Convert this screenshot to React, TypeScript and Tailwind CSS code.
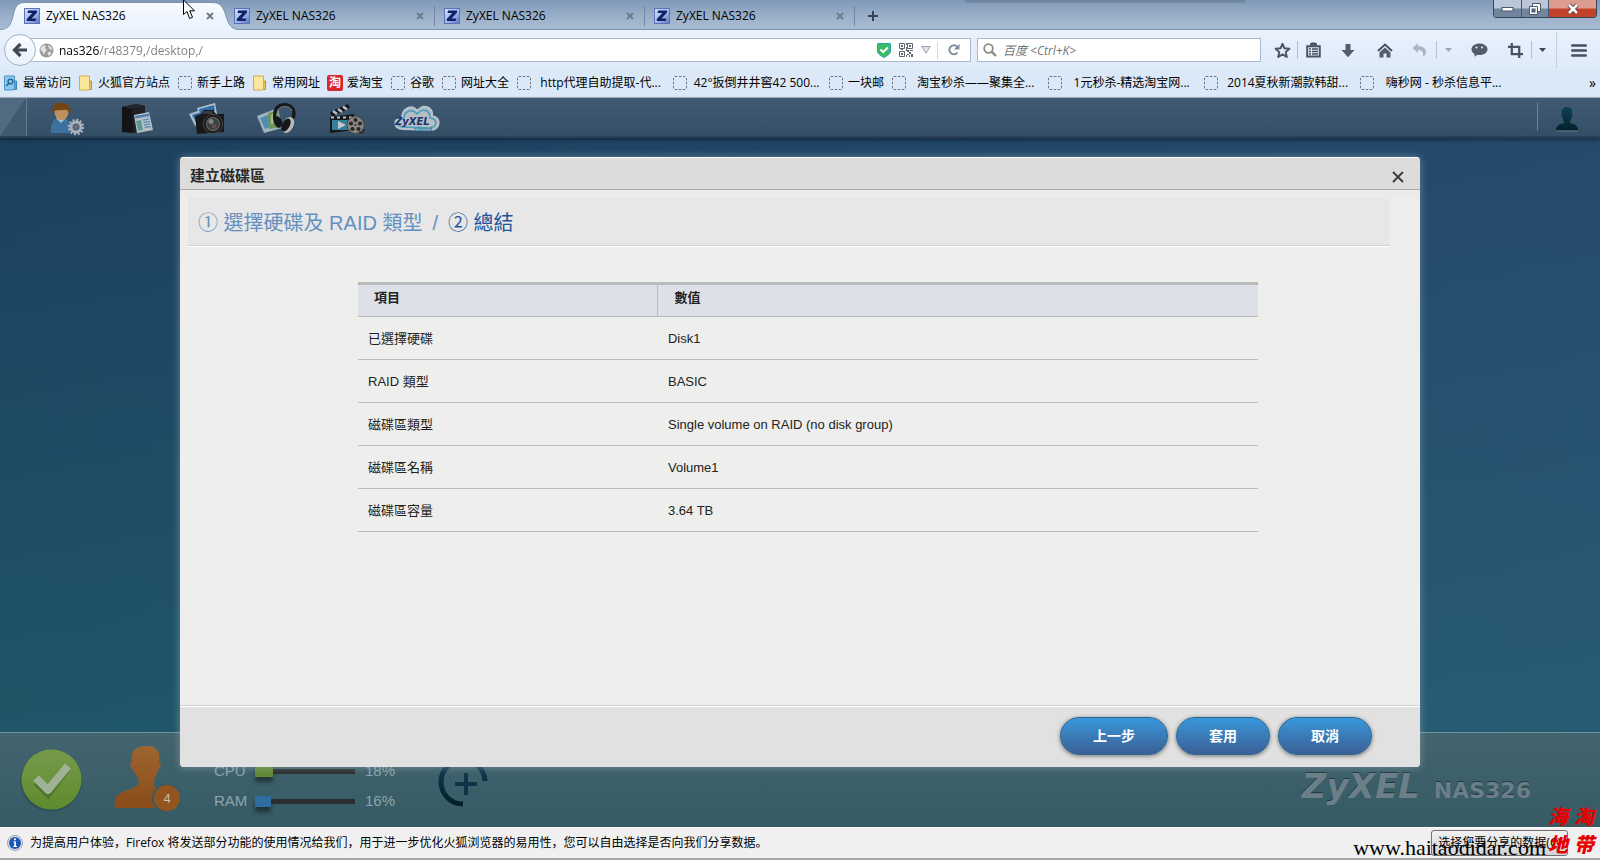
import React from "react";

const CHROME_FONT = "font-['Open_Sans','Noto_Sans_CJK_SC',sans-serif]";
const NAS_FONT = "font-['Liberation_Sans','Noto_Sans_CJK_TC',sans-serif]";

/* ---------- browser tabs ---------- */

function ZIcon() {
  return (
    <svg width="16" height="16" viewBox="0 0 16 16" className="shrink-0" aria-hidden="true">
      <defs>
        <linearGradient id="zbg" x1="0" y1="0" x2="1" y2="1">
          <stop offset="0" stopColor="#d3e2f8" />
          <stop offset="0.5" stopColor="#9fbdec" />
          <stop offset="1" stopColor="#5f74c4" />
        </linearGradient>
      </defs>
      <rect x="0.5" y="0.5" width="15" height="15" fill="url(#zbg)" stroke="#5d72b8" />
      <path d="M4 2.5H13V4.6L7.6 10.5H12.2L11.6 13H2.8V11L8.3 5H3.6Z" fill="#141f66" />
    </svg>
  );
}

function CloseMark() {
  return (
    <svg width="8" height="8" viewBox="0 0 8 8" aria-hidden="true">
      <path d="M1 1L7 7M7 1L1 7" stroke="#6f7c8b" strokeWidth="2" />
    </svg>
  );
}

function Tab({ active = false }: { active?: boolean }) {
  return (
    <div className="relative flex h-8 w-[210px] items-center pr-2 pl-[10px]">
      {active && (
        <svg className="absolute -left-[14px] top-0" width="240" height="30" viewBox="0 0 240 30" aria-hidden="true">
          <defs>
            <linearGradient id="tabbg" x1="0" y1="0" x2="0" y2="1">
              <stop offset="0" stopColor="#f7faff" />
              <stop offset="1" stopColor="#eaf2fd" />
            </linearGradient>
          </defs>
          <path d="M0 30V29C9 29 11 24 13 16C15 7 17 2.500 25 2.500H212C221 2.500 223 7 226 16C229 25 231 29.500 240 29.500V30Z" fill="url(#tabbg)" />
          <path d="M0 29.500C9 29.500 11 24 13 16C15 7 17 2.500 25 2.500H212C221 2.500 223 7 226 16C229 25 231 29.500 240 29.500" fill="none" stroke="#7890a8" />
        </svg>
      )}
      <div className="relative flex flex-1 items-center gap-[6px]">
        <ZIcon />
        <span className="flex-1 text-xs text-black">ZyXEL NAS326</span>
        <button type="button" aria-label="关闭标签页" className="flex size-3 items-center justify-center">
          <CloseMark />
        </button>
      </div>
      {!active && <span className="absolute right-[-1px] top-[6px] h-5 w-px bg-[#7388a3]" />}
    </div>
  );
}

function TabStrip() {
  return (
    <div className="relative flex h-[30px] items-start border-b border-[#7b92aa] bg-linear-to-b from-[#7f99b8] via-[#98adc7] to-[#a9bdd4]">
      <div className="absolute right-[355px] top-0 h-[2px] w-[280px] bg-[#66748a] blur-[1px]" />
      <div className="flex pl-[14px]">
        <Tab active />
        <Tab />
        <Tab />
        <Tab />
      </div>
      <button type="button" aria-label="新标签页" className="flex h-8 w-[38px] items-center justify-center">
        <svg width="12" height="12" viewBox="0 0 12 12" aria-hidden="true">
          <path d="M6 1V11M1 6H11" stroke="#37424e" strokeWidth="2" />
        </svg>
      </button>
      <div className="ml-auto mr-[3px] flex h-[18px] overflow-hidden rounded-b-[4px] border border-t-0 border-[#38455a]">
        <button type="button" aria-label="最小化" className="flex w-7 items-center justify-center border-r border-[#46566e] bg-linear-to-b from-[#b9c7d9] from-45% to-[#71859f] to-55%">
          <svg width="13" height="6" viewBox="0 0 13 6" aria-hidden="true">
            <rect x="1" y="1.500" width="11" height="3.500" fill="#fff" stroke="#4b5768" />
          </svg>
        </button>
        <button type="button" aria-label="还原" className="flex w-[27px] items-center justify-center border-r border-[#46566e] bg-linear-to-b from-[#b9c7d9] from-45% to-[#71859f] to-55%">
          <svg width="12" height="12" viewBox="0 0 12 12" aria-hidden="true">
            <path d="M3.500 .5H11.500V8.500H3.500Z" fill="#fff" stroke="#4b5768" />
            <path d="M.5 3.500H8.500V11.500H.5Z" fill="#fff" stroke="#4b5768" />
            <rect x="3" y="6" width="3" height="3" fill="#5e718b" stroke="#4b5768" />
          </svg>
        </button>
        <button type="button" aria-label="关闭" className="flex w-[47px] items-center justify-center bg-linear-to-b from-[#dc9c90] from-45% to-[#c2412b] to-55%">
          <svg width="14" height="12" viewBox="0 0 14 12" aria-hidden="true">
            <path d="M3 2L11 10M11 2L3 10" stroke="#5b3238" strokeWidth="4.500" />
            <path d="M3 2L11 10M11 2L3 10" stroke="#fff" strokeWidth="2.600" />
          </svg>
        </button>
      </div>
      <svg className="absolute left-[182px] top-0" width="15" height="20" viewBox="0 0 15 20" aria-hidden="true">
        <path d="M1.500 0V14.500L5 11.500L7.500 18.500L10.500 17.300L7.800 10.800H12.500Z" fill="#fff" stroke="#000" />
      </svg>
    </div>
  );
}

/* ---------- navigation toolbar ---------- */

function Divider() {
  return <span className="h-[18px] w-px shrink-0 bg-[#b3bfcd]" />;
}

function ToolButton({ label, width, children }: { label: string; width: string; children: React.ReactNode }) {
  return (
    <button type="button" aria-label={label} className={"flex h-6 shrink-0 items-center justify-center " + width}>
      {children}
    </button>
  );
}

function NavBar() {
  return (
    <div className="flex h-10 items-center bg-linear-to-b from-[#e9f1fc] to-[#deebf9]">
      <button type="button" aria-label="后退" className="relative z-10 ml-1 flex size-8 shrink-0 items-center justify-center rounded-full border border-[#9fb0c4] bg-linear-to-b from-[#fafcff] to-[#eaf2fc]">
        <svg width="16" height="16" viewBox="0 0 16 16" aria-hidden="true">
          <path d="M15 8H3M8.500 2L2.500 8L8.500 14" fill="none" stroke="#3f4a57" strokeWidth="3.200" />
        </svg>
      </button>
      <div className="-ml-[6px] flex h-6 flex-1 items-center border border-[#a9bad0] bg-white pl-2">
        <svg width="15" height="15" viewBox="0 0 15 15" className="shrink-0" aria-hidden="true">
          <circle cx="7.500" cy="7.500" r="7" fill="#9a9a9a" />
          <path d="M2 4L5 2L7 3L6 5L8 7L6 9L5 12L3.500 9L1.500 7Z" fill="#e2e2e2" />
          <path d="M9 2L12.500 4L13.500 7L11 6.500L9.500 4.500ZM9 9L12 8.500L12 11L10 13L8.500 11Z" fill="#dcdcdc" />
        </svg>
        <input
          aria-label="地址"
          defaultValue="nas326/r48379,/desktop,/"
          className="ml-[5px] h-5 min-w-0 flex-1 bg-linear-to-r from-black from-[40px] to-[#7d7d7d] to-[40px] bg-clip-text text-xs text-transparent caret-black outline-none"
        />
        <div className="flex items-center">
          <svg width="14" height="15" viewBox="0 0 14 15" aria-hidden="true">
            <path d="M.5 .5H13.500V8C13.500 11 10 13 7 14.500C4 13 .5 11 .5 8Z" fill="#3dbb62" stroke="#2aa8b8" />
            <path d="M3.500 6.500L6.200 9.200L10.800 4.500" fill="none" stroke="#fff" strokeWidth="2" />
          </svg>
          <svg className="ml-2" width="14" height="14" viewBox="0 0 14 14" aria-hidden="true">
            <path d="M.5 .5H5.500V5.500H.5ZM8.500 .5H13.500V5.500H8.500ZM.5 8.500H5.500V13.500H.5Z" fill="none" stroke="#5e6670" />
            <path d="M2 2H4V4H2ZM10 2H12V4H10ZM2 10H4V12H2ZM7 0H8V2H7ZM7 4H8V8H7ZM8 7H10V9H8ZM11 7H14V8H11ZM10 9H12V11H10ZM12 11H14V14H12ZM8 11H10V12H8ZM7 12H8V14H7ZM10 12H11V14H10ZM2 6H4V7H2Z" fill="#5e6670" />
          </svg>
          <svg className="ml-2" width="10" height="8" viewBox="0 0 10 8" aria-hidden="true">
            <path d="M.8 .5H9.200L5 7.300Z" fill="#dfe4ea" stroke="#9aa5b3" />
          </svg>
          <span className="ml-[6px] h-[17px] w-px bg-[#cfd8e2]" />
          <button type="button" aria-label="刷新" className="flex h-[22px] w-8 items-center justify-center">
            <svg width="14" height="14" viewBox="0 0 14 14" aria-hidden="true">
              <path d="M10.500 9.500A4.500 4.500 0 1 1 10.300 3.800" fill="none" stroke="#808d9d" strokeWidth="2" />
              <path d="M12.500 .8V6.500H7Z" fill="#808d9d" />
            </svg>
          </button>
        </div>
      </div>
      <div className="ml-[6px] flex h-6 w-[284px] shrink-0 items-center border border-[#a9bad0] bg-white pl-[5px]">
        <svg width="14" height="14" viewBox="0 0 14 14" className="shrink-0" aria-hidden="true">
          <circle cx="5.500" cy="5.500" r="4.300" fill="none" stroke="#8b8b8b" strokeWidth="1.800" />
          <path d="M8.600 8.600L13 13" stroke="#8b8b8b" strokeWidth="2.400" />
        </svg>
        <input aria-label="搜索" placeholder="百度 <Ctrl+K>" className="ml-[6px] h-5 min-w-0 flex-1 bg-transparent text-xs italic outline-none placeholder:text-[#757575]" />
      </div>
      <div className="ml-[6px] flex shrink-0 items-center">
        <ToolButton label="收藏" width="w-[30px]">
          <svg width="17" height="17" viewBox="0 0 17 17" aria-hidden="true">
            <path d="M8.500 1.800L10.500 6.300L15.400 6.800L11.700 10.100L12.800 15L8.500 12.400L4.200 15L5.300 10.100L1.600 6.800L6.500 6.300Z" fill="none" stroke="#46525f" strokeWidth="1.900" strokeLinejoin="round" />
          </svg>
        </ToolButton>
        <Divider />
        <ToolButton label="书签列表" width="w-[30px]">
          <svg width="15" height="16" viewBox="0 0 15 16" aria-hidden="true">
            <path d="M4 3.500V1.500L6 .5H9L11 1.500V3.500Z" fill="#46525f" />
            <path d="M1.200 4.200H13.800V14.500H1.200Z" fill="none" stroke="#46525f" strokeWidth="1.900" />
            <path d="M3 7H5M6 7H12M3 9.500H5M6 9.500H12M3 12H5M6 12H12" stroke="#46525f" strokeWidth="1.300" />
          </svg>
        </ToolButton>
        <ToolButton label="下载" width="w-10">
          <svg width="14" height="15" viewBox="0 0 14 15" aria-hidden="true">
            <path d="M4.500 1H9.500V7H13.500L7 14.300L.5 7H4.500Z" fill="#515d6a" />
          </svg>
        </ToolButton>
        <ToolButton label="主页" width="w-[34px]">
          <svg width="16" height="15" viewBox="0 0 16 15" aria-hidden="true">
            <path d="M1 8L8 1.500L15 8" fill="none" stroke="#46525f" strokeWidth="2" />
            <path d="M8 4.500L13.500 9.500V14.500H9.500V10.500H6.500V14.500H2.500V9.500Z" fill="#515d6a" />
          </svg>
        </ToolButton>
        <ToolButton label="撤销" width="w-[34px]">
          <svg width="15" height="14" viewBox="0 0 15 14" aria-hidden="true">
            <path d="M.5 5L6 .3V3.300C11 3.300 14 5.500 14 9C14 11 13 12.500 10.500 13.500C12 11.500 11.500 7 6 7V10Z" fill="#a9b5c3" />
          </svg>
        </ToolButton>
        <Divider />
        <ToolButton label="撤销列表" width="w-[22px]">
          <svg width="7" height="4" viewBox="0 0 7 4" aria-hidden="true"><path d="M0 0H7L3.500 4Z" fill="#9aa6b4" /></svg>
        </ToolButton>
        <ToolButton label="聊天" width="w-10">
          <svg width="17" height="14" viewBox="0 0 17 14" aria-hidden="true">
            <path d="M8.500 .5C13 .5 16.500 3 16.500 6.200C16.500 9.500 13 12 8.500 12C7.700 12 7 11.900 6.300 11.800L3.500 13.800V11C1.700 9.900 .5 8.200 .5 6.200C.5 3 4 .5 8.500 .5Z" fill="#515d6a" />
            <circle cx="5.500" cy="4.500" r="1.100" fill="#dfe9f6" /><circle cx="11" cy="4.500" r="1.100" fill="#dfe9f6" />
          </svg>
        </ToolButton>
        <ToolButton label="截图" width="w-8">
          <svg width="15" height="15" viewBox="0 0 15 15" aria-hidden="true">
            <path d="M3.800 0V11.200H15M0 3.800H11.200V15" fill="none" stroke="#46525f" strokeWidth="2.200" />
          </svg>
        </ToolButton>
        <Divider />
        <ToolButton label="截图选项" width="w-5">
          <svg width="7" height="4" viewBox="0 0 7 4" aria-hidden="true"><path d="M0 0H7L3.500 4Z" fill="#3b4652" /></svg>
        </ToolButton>
        <span className="ml-1 h-9 w-px bg-[#c4d0de]" />
        <ToolButton label="菜单" width="w-[43px]">
          <svg width="16" height="13" viewBox="0 0 16 13" aria-hidden="true">
            <path d="M1.200 1.500H14.800M1.200 6.500H14.800M1.200 11.500H14.800" stroke="#46525f" strokeWidth="2.400" strokeLinecap="round" />
          </svg>
        </ToolButton>
      </div>
    </div>
  );
}

/* ---------- bookmarks ---------- */

type BookmarkKind = "recent" | "folder" | "blank" | "tao";

const bookmarks: { kind: BookmarkKind; text: string; wide?: boolean }[] = [
  { kind: "recent", text: "最常访问" },
  { kind: "folder", text: "火狐官方站点" },
  { kind: "blank", text: "新手上路" },
  { kind: "folder", text: "常用网址" },
  { kind: "tao", text: "爱淘宝" },
  { kind: "blank", text: "谷歌" },
  { kind: "blank", text: "网址大全" },
  { kind: "blank", text: "http代理自助提取-代...", wide: true },
  { kind: "blank", text: "42°扳倒井井窖42 500...", wide: true },
  { kind: "blank", text: "一块邮" },
  { kind: "blank", text: "淘宝秒杀——聚集全...", wide: true },
  { kind: "blank", text: "1元秒杀-精选淘宝网...", wide: true },
  { kind: "blank", text: "2014夏秋新潮款韩甜...", wide: true },
  { kind: "blank", text: "嗨秒网 - 秒杀信息平...", wide: true },
];

function BookmarkIcon({ kind }: { kind: BookmarkKind }) {
  if (kind === "tao") {
    return <span className="flex size-4 shrink-0 items-center justify-center rounded-[2px] bg-[#d8262f] text-xs leading-4 font-bold text-white">淘</span>;
  }
  if (kind === "blank") {
    return (
      <svg width="16" height="16" viewBox="0 0 16 16" className="shrink-0" aria-hidden="true">
        <rect x="1.500" y="1.500" width="13" height="13" rx="1.500" fill="none" stroke="#6e7681" strokeDasharray="2.500 1.500" />
      </svg>
    );
  }
  const folder = kind === "folder";
  return (
    <svg width="16" height="16" viewBox="0 0 16 16" className="shrink-0" aria-hidden="true">
      <path d="M10 6H13.500V14.500H10Z" fill={folder ? "#e9c758" : "#5aa3d6"} stroke={folder ? "#b8953a" : "#3b83b4"} />
      <path d="M1.500 1H11.500V14L10.500 15H1.500Z" fill={folder ? "#fbe79a" : "#8cc8ec"} stroke={folder ? "#cfae4d" : "#4b94c4"} />
      {!folder && (
        <g fill="none" stroke="#1f6498" strokeWidth="1.400">
          <circle cx="7.500" cy="6.500" r="2.400" />
          <path d="M5.800 8.300L3.300 11" />
        </g>
      )}
    </svg>
  );
}

function Bookmarks() {
  return (
    <nav aria-label="书签" className="flex h-7 items-center gap-[7px] border-b border-[#a3b2c4] bg-[#dbe8f7] pb-px pl-[3px]">
      {bookmarks.map((b) => (
        <a key={b.text} href="#" className={"flex shrink-0 items-center gap-1 " + (b.wide ? "w-[149px]" : "")}>
          <BookmarkIcon kind={b.kind} />
          <span className={"text-xs whitespace-nowrap text-black " + (b.wide ? "flex-1 text-center" : "")}>{b.text}</span>
        </a>
      ))}
      <button type="button" aria-label="更多书签" className="ml-auto pr-1 text-sm leading-4 text-black">»</button>
    </nav>
  );
}

/* ---------- NAS desktop ---------- */

function AccountIcon() {
  return (
    <svg width="36" height="34" viewBox="0 0 36 34" aria-hidden="true">
      <path d="M2 31C1 19 6 16 12 16C19 16 22 20 22 31Z" fill="#3d72a0" />
      <path d="M7 16L12 21L17 16L14 14H10Z" fill="#a9c0d4" />
      <ellipse cx="12.500" cy="10" rx="7" ry="8" fill="#bd915b" />
      <path d="M3.500 11C2 3 8 0 13 1C20 1 23 6 21 12C20 9 18 7 14 8C10 9 6 7 3.500 11Z" fill="#744414" />
      <circle cx="27" cy="25" r="5" fill="#525d75" stroke="#a7b1bd" strokeWidth="3" />
      <circle cx="27" cy="25" r="7.200" fill="none" stroke="#a7b1bd" strokeWidth="2.200" strokeDasharray="2 1.770" />
      <circle cx="27" cy="25" r="2" fill="#75707c" />
    </svg>
  );
}

function StorageIcon() {
  return (
    <svg width="34" height="34" viewBox="0 0 34 34" aria-hidden="true">
      <path d="M2 5L16 2L25 4V29L13 31L2 30Z" fill="#121417" />
      <path d="M2 5L16 2L25 4L12 7Z" fill="#25282c" />
      <path d="M12 7L25 4V29L13 31Z" fill="#1e2023" />
      <path d="M14 13L29 10L33 28L17 31Z" fill="#b7c1c7" />
      <path d="M15 14L29 11.500L29.500 14L15.500 16.500Z" fill="#4a7fac" />
      <path d="M16 19L21 18L23 28L18 29Z" fill="#569a91" />
      <path d="M23 18L29 17M23.500 20.500L30 19.500M24 23L30 22M24.500 25.500L31 24.500" stroke="#6594ba" strokeWidth="1.300" />
    </svg>
  );
}

function PhotoIcon() {
  return (
    <svg width="38" height="34" viewBox="0 0 38 34" aria-hidden="true">
      <path d="M1 12L24 4L28 16L7 24Z" fill="#aebbc8" />
      <path d="M9 6L27 1L29 12L12 15Z" fill="#b6c3d0" />
      <path d="M11 7L26 3L27 9L12 12Z" fill="#2e70ac" />
      <path d="M4 13L20 8L22 14L8 20Z" fill="#2f6ca6" />
      <path d="M7 14L13 12L16 8H25L28 12L36 12V30L9 32Z" fill="#18191c" />
      <path d="M16 9H24L25 12H14Z" fill="#3a3c40" />
      <circle cx="25" cy="22" r="9.500" fill="#15171a" stroke="#4c4c4e" />
      <circle cx="25" cy="22" r="6.500" fill="#37413f" stroke="#5d5c59" strokeWidth="1.500" />
      <circle cx="23" cy="19.500" r="2.500" fill="#7d877f" />
      <circle cx="26" cy="24" r="2.500" fill="#5f4b51" />
    </svg>
  );
}

function MusicIcon() {
  return (
    <svg width="42" height="34" viewBox="0 0 42 34" aria-hidden="true">
      <path d="M1 14L22 6L26 26L8 31Z" fill="#a3b3c2" />
      <path d="M4 16L12 13L14 25L9 27Z" fill="#508eb0" />
      <path d="M12 11L22 9L24 25L13 27Z" fill="#719553" />
      <path d="M16 13V22M16 13L20 12V20" fill="none" stroke="#b7cf9e" strokeWidth="1.500" />
      <path d="M19 18C17 5 24 2 31 3C39 5 40 13 34 21" fill="none" stroke="#171b1f" strokeWidth="3.500" />
      <path d="M22 8C25 3 34 3 36 9" fill="none" stroke="#79828b" />
      <ellipse cx="22" cy="20" rx="4" ry="6" fill="#14181b" transform="rotate(-20 22 20)" />
      <ellipse cx="32" cy="23" rx="5.500" ry="8.500" fill="#b7b9ba" transform="rotate(28 32 23)" />
      <ellipse cx="30" cy="23" rx="3.800" ry="7" fill="#14171a" transform="rotate(28 30 23)" />
    </svg>
  );
}

function VideoIcon() {
  return (
    <svg width="38" height="34" viewBox="0 0 38 34" aria-hidden="true">
      <path d="M2 15L26 12V28L2 31Z" fill="#15191d" />
      <path d="M4 18H22V28H4Z" fill="#308199" />
      <path d="M10 19L18 23L10 27Z" fill="#bfc9cd" />
      <path d="M2 10L20 2L22 6L4 15Z" fill="#15191d" />
      <path d="M5 9L9 12M10 7L14 10M15 4.500L19 7.500" stroke="#b9c0c5" strokeWidth="2.500" />
      <path d="M3 15.500H26" stroke="#b9c0c5" strokeWidth="2" strokeDasharray="3 3" />
      <circle cx="27.500" cy="23" r="8.500" fill="#8e8882" stroke="#4d4a48" />
      <g fill="#282829">
        <circle cx="27.500" cy="18" r="2.100" /><circle cx="32" cy="21.500" r="2.100" /><circle cx="30.500" cy="27" r="2.100" />
        <circle cx="24.500" cy="27" r="2.100" /><circle cx="23" cy="21.500" r="2.100" /><circle cx="27.500" cy="23" r="1" />
      </g>
      <path d="M31 30C34 32 36 30 36 27" fill="none" stroke="#31302f" strokeWidth="2" />
    </svg>
  );
}

function CloudIcon() {
  return (
    <svg width="46" height="30" viewBox="0 0 46 30" aria-hidden="true">
      <path d="M9 25C-2 25 0 13 8 14C8 4 18 0 23 7C31 -2 39 5 38 12C47 13 47 25 37 26Z" fill="#a8b5bf" stroke="#b8c3cb" strokeWidth="2" />
      <path d="M9 23C2 23 3 15 10 15C10 7 18 4 23 10C30 3 36 7 36 14C44 15 43 23 36 24Z" fill="#b6bec6" stroke="#4a9dbc" strokeWidth="1.500" />
      <text x="1" y="21" fontSize="10" fontStyle="italic" fontWeight="900" fontFamily="DejaVu Sans, sans-serif" fill="#1c3468">ZyXEL</text>
      <text x="20" y="27" fontSize="6" fontWeight="bold" fontFamily="DejaVu Sans, sans-serif" fill="#318cac">cloud</text>
    </svg>
  );
}

const apps = [
  { label: "控制台", icon: <AccountIcon /> },
  { label: "儲存", icon: <StorageIcon /> },
  { label: "照片", icon: <PhotoIcon /> },
  { label: "音樂", icon: <MusicIcon /> },
  { label: "影片", icon: <VideoIcon /> },
  { label: "ZyXEL cloud", icon: <CloudIcon /> },
];

function AppBar() {
  return (
    <header className="relative flex h-10 shrink-0 items-center border-b-2 border-[#2b4058] bg-linear-to-b from-[#405b73] to-[#344e66] shadow-[0_2px_4px_rgba(0,0,0,0.4)]">
      <div className="h-full w-[27px] border-r border-[#64798c] bg-linear-to-br from-[#506b80] from-50% to-[#3e5a70] to-50%" />
      <div className="ml-[5px] flex">
        {apps.map((a) => (
          <button key={a.label} type="button" aria-label={a.label} className="flex h-[38px] w-[70px] items-center justify-center pt-1">
            {a.icon}
          </button>
        ))}
      </div>
      <span className="ml-auto h-7 w-px bg-[#6d8193]" />
      <button type="button" aria-label="使用者" className="mr-1 flex h-[38px] w-[58px] items-center justify-center pt-1">
        <svg width="24" height="26" viewBox="0 0 24 26" aria-hidden="true">
          <defs>
            <linearGradient id="ug" x1="0" y1="0" x2="0" y2="1">
              <stop offset="0" stopColor="#0d4153" /><stop offset="1" stopColor="#04202c" />
            </linearGradient>
          </defs>
          <path d="M12 1C16 1 18 4 17 8C18 9 17 11 16.500 11.500C16 14 15 15 15 17C19 18 23 19 23 24.500H1C1 19 5 18 9 17C9 15 8 14 7.500 11.500C7 11 6 9 7 8C6 4 8 1 12 1Z" fill="url(#ug)" />
          <path d="M1 25H23" stroke="#647789" />
        </svg>
      </button>
    </header>
  );
}

function Meter({ label, value, color }: { label: string; value: number; color: string }) {
  return (
    <div className="flex h-[30px] items-center text-[15px] text-[#8fa5aa]">
      <span className="w-[41px]">{label}</span>
      <span className="flex h-[11px] w-[100px] items-center">
        <span className={"h-[11px] shadow-[0_5px_4px_rgba(0,0,0,0.45)] " + color} style={{ width: `${value}%` }} />
        <span className="h-[5px] flex-1 bg-[#2b2d30]" />
      </span>
      <span className="ml-[10px]">{value}%</span>
    </div>
  );
}

function StatusBar() {
  return (
    <footer className="flex h-[95px] shrink-0 items-center border-t border-[#73929c] bg-linear-to-b from-[#42646f] to-[#365b65]">
      <svg className="ml-[18px]" width="66" height="66" viewBox="0 0 66 66" aria-hidden="true">
        <defs>
          <linearGradient id="okg" x1="0" y1="0" x2="0" y2="1">
            <stop offset="0" stopColor="#779a4b" /><stop offset="1" stopColor="#5f8a2d" />
          </linearGradient>
        </defs>
        <circle cx="33" cy="34" r="31" fill="#2b4b52" opacity="0.600" />
        <circle cx="33.500" cy="32.500" r="30" fill="url(#okg)" />
        <path d="M18 35L30 47L49 22" fill="none" stroke="#4f7429" strokeWidth="7" />
        <path d="M18 31L30 43L50 19" fill="none" stroke="#9fb295" strokeWidth="8" strokeLinejoin="round" />
      </svg>
      <svg className="ml-[28px]" width="72" height="72" viewBox="0 0 72 72" aria-hidden="true">
        <defs>
          <linearGradient id="og" x1="0" y1="0" x2="0" y2="1">
            <stop offset="0" stopColor="#9d6531" /><stop offset="1" stopColor="#8a4c18" />
          </linearGradient>
        </defs>
        <path d="M34 2C44 1 49 7 47 18C50 19 49 24 46 26C44 33 42 34 42 42L48 45L41 54L43 64H3C2 53 4 51 13 47C22 44 27 42 27 37C26 32 23 30 21 26C18 24 17 19 20 18C18 8 23 2 34 2Z" fill="url(#og)" />
        <circle cx="55" cy="54" r="15" fill="#385c66" />
        <circle cx="55" cy="54" r="13" fill="#94541f" />
        <text x="55" y="59" textAnchor="middle" fontSize="13" fontFamily="Liberation Sans, sans-serif" fill="#c9bdb0">4</text>
      </svg>
      <div className="ml-[30px] pt-3">
        <Meter label="CPU" value={18} color="bg-[#648a35]" />
        <Meter label="RAM" value={16} color="bg-[#2d6e9e]" />
      </div>
      <svg className="ml-[43px] mt-1" width="52" height="52" viewBox="0 0 52 52" aria-hidden="true">
        <defs>
          <linearGradient id="pg" x1="0" y1="0" x2="0" y2="1">
            <stop offset="0" stopColor="#123e55" /><stop offset="1" stopColor="#051f2b" />
          </linearGradient>
        </defs>
        <path d="M25 48A22 22 0 1 1 47 25" fill="none" stroke="url(#pg)" strokeWidth="5" />
        <path d="M26 17H30V26H39V30H30V39H26V30H17V26H26Z" fill="#0d3448" />
      </svg>
      <div className="mr-[69px] ml-auto flex items-baseline gap-[14px] pt-4 font-['DejaVu_Sans','Open_Sans',sans-serif] font-bold text-[#6b7f88] [text-shadow:0_-1px_0_#24373e]">
        <span className="text-[34px] leading-10 italic">ZyXEL</span>
        <span className="text-[22px] leading-10">NAS326</span>
      </div>
    </footer>
  );
}

/* ---------- volume wizard ---------- */

const rows = [
  ["已選擇硬碟", "Disk1"],
  ["RAID 類型", "BASIC"],
  ["磁碟區類型", "Single volume on RAID (no disk group)"],
  ["磁碟區名稱", "Volume1"],
  ["磁碟區容量", "3.64 TB"],
];

function WizardButton({ children }: { children: React.ReactNode }) {
  return (
    <button type="button" className="h-[38px] rounded-full border border-[#2b6791] bg-linear-to-b from-[#3798dc] to-[#3a5f96] px-8 text-sm font-bold text-white shadow-[0_1px_4px_rgba(0,0,0,0.5)]">
      {children}
    </button>
  );
}

function Dialog() {
  return (
    <section role="dialog" aria-labelledby="wizard-title" className="flex w-full max-w-[1240px] flex-col overflow-hidden rounded-[4px] bg-[#eeeeec] text-[#222] shadow-[0_0_8px_rgba(170,190,195,0.5)]">
      <header className="flex h-[33px] shrink-0 items-center justify-between border-t border-b border-t-white border-b-[#a9a9a9] bg-[#dcdcdc] pt-1 pr-[14px] pl-[10px]">
        <h1 id="wizard-title" className="text-[15px] leading-6 font-bold text-[#2a2a2a]">建立磁碟區</h1>
        <button type="button" aria-label="關閉" className="flex size-4 items-center justify-center pt-[2px]">
          <svg width="14" height="12" viewBox="0 0 14 12" aria-hidden="true">
            <path d="M2 1L12 11M12 1L2 11" stroke="#3a3a3a" strokeWidth="1.800" />
          </svg>
        </button>
      </header>
      <div className="h-2 shrink-0 bg-[#ebebeb]" />
      <div className="flex-1">
        <h2 className="mr-[30px] ml-2 flex h-[48px] items-center gap-[10px] border-b border-[#cfcfcf] bg-[#e7e7e7] pt-[3px] pl-[10px] text-xl text-[#6490bf] shadow-[0_1px_0_#fff]">
          <span>① 選擇硬碟及 RAID 類型</span>
          <span>/</span>
          <span className="text-[#1f549c]">② 總結</span>
        </h2>
        <div className="mt-9 mr-[162px] ml-[178px]">
          <table className="w-full table-fixed border-collapse text-left text-[13px]">
            <thead>
              <tr className="h-[33px] border-t-[3px] border-b border-[#b9bbbc] bg-[#dde1e7]">
                <th scope="col" className="w-1/3 border-r border-[#b9bbbc] px-4 pb-[5px] font-bold">項目</th>
                <th scope="col" className="px-4 pb-[5px] font-bold">數值</th>
              </tr>
            </thead>
            <tbody>
              {rows.map(([name, value]) => (
                <tr key={name} className="h-[43px] border-b border-[#b9bbbc]">
                  <td className="px-[10px] pt-px">{name}</td>
                  <td className="px-[10px] pt-px">{value}</td>
                </tr>
              ))}
            </tbody>
          </table>
        </div>
      </div>
      <footer className="flex h-[62px] shrink-0 items-center justify-end gap-2 border-t border-[#d2d2d2] bg-[#e1e1e1] pr-12 pb-[2px] shadow-[inset_0_1px_0_#fff]">
        <WizardButton>上一步</WizardButton>
        <WizardButton>套用</WizardButton>
        <WizardButton>取消</WizardButton>
      </footer>
    </section>
  );
}

/* ---------- notification bar and site mark ---------- */

function NotificationBar() {
  return (
    <div className="relative flex h-[33px] shrink-0 items-center border-t border-b-2 border-t-white border-b-[#a8a8a8] bg-[#f0f0f0] pr-8 pl-[7px] text-xs text-black">
      <svg width="16" height="16" viewBox="0 0 16 16" aria-hidden="true">
        <circle cx="8" cy="8" r="7.500" fill="#dfe3ea" stroke="#9ba3b0" />
        <circle cx="8" cy="8" r="6" fill="#1f55b5" />
        <path d="M7 3.500H9V5.300H7ZM6.300 6.500H9V11H10V12H6.300V11H7.200V7.500H6.300Z" fill="#fff" />
      </svg>
      <p className="ml-[7px]">为提高用户体验，Firefox 将发送部分功能的使用情况给我们，用于进一步优化火狐浏览器的易用性，您可以自由选择是否向我们分享数据。</p>
      <button type="button" className="ml-auto h-[26px] rounded-[3px] border border-[#707070] bg-linear-to-b from-[#f2f2f2] to-[#d4d4d4] px-[6px] whitespace-nowrap">
        选择您要分享的数据(C)
      </button>
      <div className="absolute right-[6px] bottom-[-2px] flex items-end gap-[2px]">
        <span className="font-['Liberation_Serif',serif] text-[22px] leading-6 text-black">www.haitaodidar.com</span>
        <span className="grid grid-cols-2 gap-x-[6px] pb-[2px] font-['Noto_Sans_CJK_SC',sans-serif] text-xl leading-[28px] font-black text-[#e60000] italic">
          <span>海</span>
          <span>淘</span>
          <span>地</span>
          <span>带</span>
        </span>
      </div>
    </div>
  );
}

export default function App() {
  return (
    <div className={"flex min-h-screen flex-col overflow-hidden " + CHROME_FONT}>
      <TabStrip />
      <NavBar />
      <Bookmarks />
      <main className={"relative flex flex-1 flex-col bg-linear-to-b from-[#1b3e5e] to-[#205969] " + NAS_FONT}>
        <div className="absolute inset-0 bg-linear-to-r from-transparent to-[#4c72a8]/20" />
        <AppBar />
        <div className="relative flex min-h-[592px] flex-1 flex-col justify-end">
          <StatusBar />
          <div className="absolute inset-0 flex justify-center pt-[19px] pb-[60px]">
            <Dialog />
          </div>
        </div>
      </main>
      <NotificationBar />
    </div>
  );
}
